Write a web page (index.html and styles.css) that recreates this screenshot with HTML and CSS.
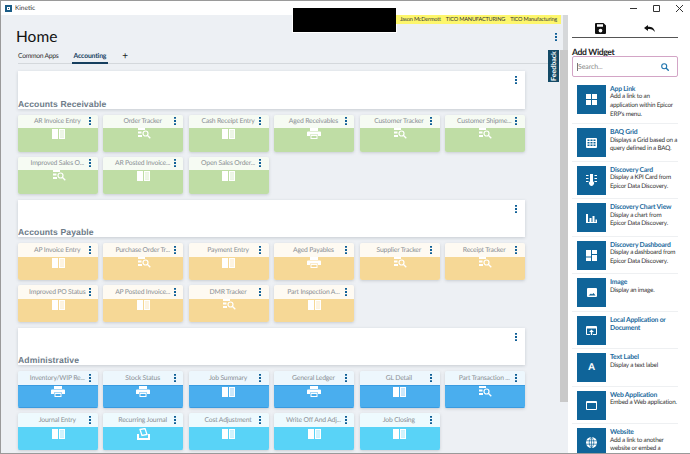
FILE: index.html
```html
<!DOCTYPE html>
<html lang="en">
<head>
<meta charset="utf-8">
<title>Kinetic</title>
<link rel="stylesheet" href="styles.css">
</head>
<body>
<svg class="defs" width="0" height="0" aria-hidden="true">
  <symbol id="book" viewBox="0 0 13 10"><path fill="#fff" d="M0 0h6v10H0z"/><path fill="#fff" fill-opacity=".72" d="M8 1.500h4v7H8z"/><path fill="#fff" fill-rule="evenodd" d="M7 0h6v10H7zM8 1.500v7h4v-7z"/></symbol>
  <symbol id="track" viewBox="0 0 13 11"><path fill="#fff" d="M0 0h7v2H0zM0 3.500h3.500v2H0zM0 7h4v2H0z"/><circle cx="7.500" cy="5.500" r="2.500" fill="none" stroke="#fff" stroke-width="1.200"/><path stroke="#fff" stroke-width="1.300" d="M9.300 7.300l3 3"/></symbol>
  <symbol id="print" viewBox="0 0 14 11"><path fill="#fff" d="M3 0h8v3H3zM1 3.500h12a1 1 0 0 1 1 1V8h-3V6.500H3V8H0V4.500a1 1 0 0 1 1-1z"/><path fill="#fff" fill-rule="evenodd" d="M3.500 7h7v4h-7zM4.500 8v2h5V8z"/></symbol>
  <symbol id="sync" viewBox="0 0 13 12"><path fill="#fff" d="M0 6h2v4h9V6h2v6H0z"/><path fill="none" stroke="#fff" stroke-width="1.300" d="M3 1.500l5-1 2 6-5 1z"/></symbol>
  <symbol id="dots" viewBox="0 0 2 9" preserveAspectRatio="none"><path fill="#0f5f96" d="M0 0h2v2H0zM0 3.500h2v2H0zM0 7h2v2H0z"/></symbol>
</svg>
<div class="window">
  <div class="titlebar">
    <span class="app-logo"><span></span></span>
    <span class="app-name">Kinetic</span>
    <div class="win-controls">
      <svg width="7" height="7" viewBox="0 0 7 7"><path d="M0 3.500h7" stroke="#333"/></svg>
      <svg width="7" height="7" viewBox="0 0 7 7"><path d="M.5.500h6v6h-6z" fill="none" stroke="#333"/></svg>
      <svg width="7" height="7" viewBox="0 0 7 7"><path d="M0 0l7 7M7 0L0 7" stroke="#333"/></svg>
    </div>
  </div>
  <div class="main">
    <div class="content">
      <div class="home-row">
        <h1 class="home">Home</h1>
        <svg class="dots page-dots"><use href="#dots"/></svg>
      </div>
      <div class="tabs">
        <span class="tab">Common Apps</span>
        <span class="tab active">Accounting</span>
        <span class="tab-add">+</span>
      </div>

      <div class="section">
        <h2>Accounts Receivable</h2>
        <svg class="dots"><use href="#dots"/></svg>
      </div>
      <div class="grid green">
        <div class="card"><div class="card-head"><span>AR Invoice Entry</span><svg class="dots"><use href="#dots"/></svg></div><div class="card-body"><svg class="i-book"><use href="#book"/></svg></div></div>
        <div class="card"><div class="card-head"><span>Order Tracker</span><svg class="dots"><use href="#dots"/></svg></div><div class="card-body"><svg class="i-track"><use href="#track"/></svg></div></div>
        <div class="card"><div class="card-head"><span>Cash Receipt Entry</span><svg class="dots"><use href="#dots"/></svg></div><div class="card-body"><svg class="i-book"><use href="#book"/></svg></div></div>
        <div class="card"><div class="card-head"><span>Aged Receivables</span><svg class="dots"><use href="#dots"/></svg></div><div class="card-body"><svg class="i-print"><use href="#print"/></svg></div></div>
        <div class="card"><div class="card-head"><span>Customer Tracker</span><svg class="dots"><use href="#dots"/></svg></div><div class="card-body"><svg class="i-track"><use href="#track"/></svg></div></div>
        <div class="card"><div class="card-head"><span>Customer Shipme...</span><svg class="dots"><use href="#dots"/></svg></div><div class="card-body"><svg class="i-track"><use href="#track"/></svg></div></div>
        <div class="card"><div class="card-head"><span>Improved Sales O...</span><svg class="dots"><use href="#dots"/></svg></div><div class="card-body"><svg class="i-track"><use href="#track"/></svg></div></div>
        <div class="card"><div class="card-head"><span>AR Posted Invoice...</span><svg class="dots"><use href="#dots"/></svg></div><div class="card-body"><svg class="i-book"><use href="#book"/></svg></div></div>
        <div class="card"><div class="card-head"><span>Open Sales Order...</span><svg class="dots"><use href="#dots"/></svg></div><div class="card-body"><svg class="i-book"><use href="#book"/></svg></div></div>
      </div>

      <div class="section">
        <h2>Accounts Payable</h2>
        <svg class="dots"><use href="#dots"/></svg>
      </div>
      <div class="grid orange">
        <div class="card"><div class="card-head"><span>AP Invoice Entry</span><svg class="dots"><use href="#dots"/></svg></div><div class="card-body"><svg class="i-book"><use href="#book"/></svg></div></div>
        <div class="card"><div class="card-head"><span>Purchase Order Tr...</span><svg class="dots"><use href="#dots"/></svg></div><div class="card-body"><svg class="i-track"><use href="#track"/></svg></div></div>
        <div class="card"><div class="card-head"><span>Payment Entry</span><svg class="dots"><use href="#dots"/></svg></div><div class="card-body"><svg class="i-book"><use href="#book"/></svg></div></div>
        <div class="card"><div class="card-head"><span>Aged Payables</span><svg class="dots"><use href="#dots"/></svg></div><div class="card-body"><svg class="i-print"><use href="#print"/></svg></div></div>
        <div class="card"><div class="card-head"><span>Supplier Tracker</span><svg class="dots"><use href="#dots"/></svg></div><div class="card-body"><svg class="i-track"><use href="#track"/></svg></div></div>
        <div class="card"><div class="card-head"><span>Receipt Tracker</span><svg class="dots"><use href="#dots"/></svg></div><div class="card-body"><svg class="i-track"><use href="#track"/></svg></div></div>
        <div class="card"><div class="card-head"><span>Improved PO Status</span><svg class="dots"><use href="#dots"/></svg></div><div class="card-body"><svg class="i-book"><use href="#book"/></svg></div></div>
        <div class="card"><div class="card-head"><span>AP Posted Invoice...</span><svg class="dots"><use href="#dots"/></svg></div><div class="card-body"><svg class="i-book"><use href="#book"/></svg></div></div>
        <div class="card"><div class="card-head"><span>DMR Tracker</span><svg class="dots"><use href="#dots"/></svg></div><div class="card-body"><svg class="i-track"><use href="#track"/></svg></div></div>
        <div class="card"><div class="card-head"><span>Part Inspection A...</span><svg class="dots"><use href="#dots"/></svg></div><div class="card-body"><svg class="i-book"><use href="#book"/></svg></div></div>
      </div>

      <div class="section">
        <h2>Administrative</h2>
        <svg class="dots"><use href="#dots"/></svg>
      </div>
      <div class="grid blue">
        <div class="card"><div class="card-head"><span>Inventory/WIP Re...</span><svg class="dots"><use href="#dots"/></svg></div><div class="card-body"><svg class="i-print"><use href="#print"/></svg></div></div>
        <div class="card"><div class="card-head"><span>Stock Status</span><svg class="dots"><use href="#dots"/></svg></div><div class="card-body"><svg class="i-print"><use href="#print"/></svg></div></div>
        <div class="card"><div class="card-head"><span>Job Summary</span><svg class="dots"><use href="#dots"/></svg></div><div class="card-body"><svg class="i-book"><use href="#book"/></svg></div></div>
        <div class="card"><div class="card-head"><span>General Ledger</span><svg class="dots"><use href="#dots"/></svg></div><div class="card-body"><svg class="i-print"><use href="#print"/></svg></div></div>
        <div class="card"><div class="card-head"><span>GL Detail</span><svg class="dots"><use href="#dots"/></svg></div><div class="card-body"><svg class="i-book"><use href="#book"/></svg></div></div>
        <div class="card"><div class="card-head"><span>Part Transaction ...</span><svg class="dots"><use href="#dots"/></svg></div><div class="card-body"><svg class="i-track"><use href="#track"/></svg></div></div>
        <div class="card cyan"><div class="card-head"><span>Journal Entry</span><svg class="dots"><use href="#dots"/></svg></div><div class="card-body"><svg class="i-book"><use href="#book"/></svg></div></div>
        <div class="card cyan"><div class="card-head"><span>Recurring Journal</span><svg class="dots"><use href="#dots"/></svg></div><div class="card-body"><svg class="i-sync"><use href="#sync"/></svg></div></div>
        <div class="card cyan"><div class="card-head"><span>Cost Adjustment</span><svg class="dots"><use href="#dots"/></svg></div><div class="card-body"><svg class="i-book"><use href="#book"/></svg></div></div>
        <div class="card cyan"><div class="card-head"><span>Write Off And Adj...</span><svg class="dots"><use href="#dots"/></svg></div><div class="card-body"><svg class="i-book"><use href="#book"/></svg></div></div>
        <div class="card cyan"><div class="card-head"><span>Job Closing</span><svg class="dots"><use href="#dots"/></svg></div><div class="card-body"><svg class="i-book"><use href="#book"/></svg></div></div>
      </div>

      <div class="feedback"><span>Feedback</span></div>
    </div>
    <div class="scrollbar"><div class="scroll-top"></div><div class="thumb"></div></div>
    <aside class="panel">
      <div class="tools">
        <svg width="11" height="11" viewBox="0 0 11 11"><path fill="#111" d="M1 0h7.500L11 2.500V10a1 1 0 0 1-1 1H1a1 1 0 0 1-1-1V1a1 1 0 0 1 1-1zm1 1.200v2.600h6V1.200zM5.500 5.700a1.900 1.900 0 1 0 0 3.800 1.900 1.900 0 0 0 0-3.800z" fill-rule="evenodd"/></svg>
        <svg width="11" height="7" viewBox="0 0 11 7"><path fill="#111" d="M4 0L0 3l4 3V4c3-.5 5 .5 7 3-1-4-3-5.200-7-5.200z"/></svg>
      </div>
      <h3 class="panel-title">Add Widget</h3>
      <div class="search">
        <span class="search-text">Search...</span>
        <svg width="8" height="8" viewBox="0 0 8 8"><circle cx="3.200" cy="3.200" r="2.500" fill="none" stroke="#1f74ad" stroke-width="1.100"/><path d="M5 5l2.700 2.700" stroke="#1f74ad" stroke-width="1.300"/></svg>
      </div>
      <div class="widgets">
        <div class="widget">
          <div class="w-icon"><svg width="11" height="11" viewBox="0 0 11 11"><path fill="#fff" d="M0 0h5v5H0zM6 0h5v5H6zM0 6h5v5H0zM6 6h5v5H6z"/></svg></div>
          <div class="w-text"><div class="w-name">App Link</div><p>Add a link to an application within Epicor ERP's menu.</p></div>
        </div>
        <div class="widget">
          <div class="w-icon"><svg width="11" height="10" viewBox="0 0 11 10"><path fill="#fff" fill-rule="evenodd" d="M1 0h9a1 1 0 0 1 1 1v8a1 1 0 0 1-1 1H1a1 1 0 0 1-1-1V1a1 1 0 0 1 1-1zm.500 1.500v1.500h2V1.500zm3 0v1.500h2V1.500zm3 0v1.500h2V1.500zm-6 2.500v1.500h2V4zm3 0v1.500h2V4zm3 0v1.500h2V4zm-6 2.500V8h2V6.500zm3 0V8h2V6.500zm3 0V8h2V6.500z"/></svg></div>
          <div class="w-text"><div class="w-name">BAQ Grid</div><p>Displays a Grid based on a query defined in a BAQ.</p></div>
        </div>
        <div class="widget">
          <div class="w-icon"><svg width="11" height="12" viewBox="0 0 11 12"><path fill="#fff" d="M4 0h3v7.200a2.500 2.500 0 1 1-3 0zM0 1h2.500v1H0zM8.500 1H11v1H8.500zM0 4h2.500v1H0zM8.500 4H11v1H8.500zM0 7h2.500v1H0zM8.500 7H11v1H8.500z"/></svg></div>
          <div class="w-text"><div class="w-name">Discovery Card</div><p>Display a KPI Card from Epicor Data Discovery.</p></div>
        </div>
        <div class="widget">
          <div class="w-icon"><svg width="11" height="10" viewBox="0 0 11 10"><path fill="#fff" d="M0 1h2v8H0zM3.500 5h2v4h-2zM6.500 3h2v6h-2zM9.500 6.500H11V9H9.500zM0 9h11v1H0z"/></svg></div>
          <div class="w-text"><div class="w-name">Discovery Chart View</div><p>Display a chart from Epicor Data Discovery.</p></div>
        </div>
        <div class="widget">
          <div class="w-icon"><svg width="11" height="11" viewBox="0 0 11 11"><path fill="#fff" d="M0 0h5v6.500H0zM6 0h5v4H6zM0 7.500h5V11H0zM6 5h5v6H6z"/></svg></div>
          <div class="w-text"><div class="w-name">Discovery Dashboard</div><p>Display a dashboard from Epicor Data Discovery.</p></div>
        </div>
        <div class="widget">
          <div class="w-icon"><svg width="10" height="9" viewBox="0 0 10 9"><path fill="#fff" fill-rule="evenodd" d="M1 0h8a1 1 0 0 1 1 1v7a1 1 0 0 1-1 1H1a1 1 0 0 1-1-1V1a1 1 0 0 1 1-1zm.500 7.500h7L6.500 5 5 6.500 4 5.500z"/></svg></div>
          <div class="w-text"><div class="w-name">Image</div><p>Display an image.</p></div>
        </div>
        <div class="widget">
          <div class="w-icon"><svg width="11" height="9" viewBox="0 0 11 9"><path fill="#fff" fill-rule="evenodd" d="M1 0h9a1 1 0 0 1 1 1v7a1 1 0 0 1-1 1H7V8h3V2.500H1V8h3v1H1a1 1 0 0 1-1-1V1a1 1 0 0 1 1-1z"/><path fill="#fff" d="M5.500 3.500L8 6H6.200v3H4.800V6H3z"/></svg></div>
          <div class="w-text"><div class="w-name">Local Application or Document</div></div>
        </div>
        <div class="widget">
          <div class="w-icon"><span class="w-letter">A</span></div>
          <div class="w-text"><div class="w-name">Text Label</div><p>Display a text label</p></div>
        </div>
        <div class="widget">
          <div class="w-icon"><svg width="11" height="9" viewBox="0 0 11 9"><path fill="#fff" fill-rule="evenodd" d="M1 0h9a1 1 0 0 1 1 1v7a1 1 0 0 1-1 1H1a1 1 0 0 1-1-1V1a1 1 0 0 1 1-1zm0 2v6h9V2z"/></svg></div>
          <div class="w-text"><div class="w-name">Web Application</div><p>Embed a Web application.</p></div>
        </div>
        <div class="widget">
          <div class="w-icon"><svg width="11" height="11" viewBox="0 0 11 11"><circle cx="5.500" cy="5.500" r="5.500" fill="#fff"/><path fill="none" stroke="#0f6499" stroke-width=".7" d="M0 3.800h11M0 7.200h11M5.500 0v11M5.500 0C2.500 3 2.500 8 5.500 11M5.500 0c3 3 3 8 0 11"/></svg></div>
          <div class="w-text"><div class="w-name">Website</div><p>Add a link to another website or embed a</p></div>
        </div>
      </div>
    </aside>
  </div>
  <div class="black-box"></div>
  <div class="userbar"><span>Jason McDermott</span><span>TICO MANUFACTURING</span><span>TICO Manufacturing</span></div>
</div>
</body>
</html>
```
FILE: styles.css
```css
* { box-sizing: border-box; }
html, body { margin: 0; height: 100%; overflow: hidden; }
body { background: #9a9a9a; font-family: Lato, "Noto Sans", sans-serif; color: #333; text-rendering: geometricPrecision; }
.defs { position: absolute; }
.window { position: relative; margin: 1px 0 0 1px; height: 452px; width: 689px; display: flex; flex-direction: column; background: #edf0f4; overflow: hidden; }

.titlebar { height: 14px; flex: none; background: #fff; display: flex; align-items: center; padding-left: 4px; }
.app-logo { width: 7px; height: 7px; background: #1b5c86; display: flex; align-items: center; justify-content: center; }
.app-logo span { width: 3px; height: 3px; border: 1px solid #fff; display: block; }
.app-name { font-size: 6.500px; margin-left: 3px; color: #333; }
.win-controls { margin-left: auto; display: flex; gap: 16px; padding-right: 7px; }

.main { flex: 1; display: flex; min-height: 0; }
.content { position: relative; width: 559px; flex: none; padding: 0 0 0 17px; }
.home-row { height: 33px; display: flex; align-items: flex-end; padding-right: 3px; }
.home { margin: 0 0 0 -2px; font-size: 15.500px; font-weight: 400; color: #111; line-height: 22px; }
.dots { width: 2px; height: 8px; flex: none; display: block; }
.page-dots { margin-left: auto; margin-bottom: 7px; }

.tabs { height: 16px; width: 531px; border-bottom: 1px solid #d4d8dc; display: flex; align-items: center; font-size: 6.800px; letter-spacing: -.3px; color: #333; }
.tab { height: 100%; display: flex; align-items: center; margin-right: 13px; }
.tab.active { color: #163f5f; border-bottom: 2px solid #163f5f; margin-bottom: -1px; font-weight: 700; letter-spacing: -.15px; padding: 2px 2px 0; }
.tab-add { font-size: 10px; margin-left: 1px; color: #222; }

.section { position: relative; width: 507px; height: 37.500px; margin-top: 7.200px; background: #fff; box-shadow: 0 1px 3px rgba(90, 100, 110, .25); display: flex; align-items: flex-end; justify-content: space-between; }
.section h2 { margin: 0; font-family: "Liberation Sans", Arial, sans-serif; font-size: 8.600px; letter-spacing: .1px; font-weight: 700; color: #6d7b88; line-height: 10px; }
.section .dots { position: absolute; right: 8px; top: 5px; }

.grid { display: grid; grid-template-columns: repeat(6, 80px); column-gap: 5.400px; row-gap: 5px; margin-top: 6px; margin-bottom: -1.300px; grid-auto-rows: 37px; }
.card { border-radius: 2px; overflow: hidden; box-shadow: 0 1px 3px rgba(90, 100, 110, .25); display: flex; flex-direction: column; }
.card-head { height: 13.500px; flex: none; display: flex; align-items: center; padding-left: 8px; font-size: 6.800px; letter-spacing: -.18px; color: #8a8f94; }
.card-head span { width: 62.500px; text-align: center; white-space: nowrap; }
.card-body { flex: 1; display: flex; justify-content: center; align-items: flex-start; padding-top: 1px; }
.i-book { width: 13px; height: 10px; }
.i-track { width: 13px; height: 11px; margin-left: 2px; margin-top: -1px; }
.i-print { width: 14px; height: 11px; margin-top: -1px; }
.i-sync { width: 13px; height: 12px; margin-top: -1px; }

.green .card-head { background: #f6fbf3; }
.green .card-body { background: #bfdda5; }
.orange .card-head { background: #fefaf2; }
.orange .card-body { background: #f6d896; }
.blue .card-head { background: #edf7fd; }
.blue .card-body { background: #4aaeee; border-top: 1px solid #3a9be0; border-bottom: 1px solid #3a9be0; }
.blue .cyan .card-head { background: #eefafe; }
.blue .cyan .card-body { background: #59d3f7; border-color: #59d3f7; }

.feedback { position: absolute; left: 547px; top: 35px; width: 11px; height: 32px; background: #144a66; color: #fff; font-size: 7px; font-weight: 700; display: flex; align-items: center; justify-content: center; }
.feedback span { transform: rotate(-90deg); white-space: nowrap; }

.scrollbar { width: 8px; flex: none; background: #edf0f4; }
.scroll-top { height: 35px; margin-left: 3px; background: #d6d8da; }
.thumb { height: 352px; background: #c9c9c9; }

.panel { flex: 1; background: #fff; padding: 0 12px 0 4px; display: flex; flex-direction: column; min-width: 0; }
.tools { height: 23px; border-bottom: 1px solid #555; display: flex; align-items: center; justify-content: space-between; flex: none; padding: 4px 23px 0; }
.panel-title { margin: 8px 0 0; font-size: 8.600px; letter-spacing: -.35px; font-weight: 700; color: #222; line-height: 12px; flex: none; }
.search { height: 21px; flex: none; margin-top: -2px; border: 1px solid #d3a5c6; border-radius: 2px; display: flex; align-items: center; justify-content: space-between; padding: 0 8px 0 4px; color: #8a8a8a; font-size: 7px; letter-spacing: -.1px; }
.search-text { border-left: 1px solid #777; line-height: 8px; }
.widgets { margin-top: 4px; flex: 1; min-height: 0; overflow: hidden; }
.widget { display: flex; gap: 4px; padding: 3.750px 0 3.750px 5px; border-bottom: 1px solid #eef0f2; }
.w-icon { width: 29px; height: 29px; flex: none; background: #0f6499; display: flex; align-items: center; justify-content: center; }
.w-letter { color: #fff; font-weight: 700; font-size: 10px; font-family: "Liberation Sans", Arial, sans-serif; }
.w-text { min-width: 0; }
.w-name { font-size: 6.800px; letter-spacing: -.2px; line-height: 8.700px; color: #1c6a9d; font-weight: 700; }
.w-text p { margin: 0; font-size: 6.300px; letter-spacing: -.2px; line-height: 8.700px; color: #333; }

.black-box { position: absolute; left: 291px; top: 7px; width: 105px; height: 25px; background: #000; border: 1px solid #fff; border-top: 0; }
.userbar { position: absolute; left: 395px; top: 14px; width: 165px; height: 9px; background: #fdf66c; display: flex; gap: 5px; justify-content: center; align-items: center; font-size: 5.600px; letter-spacing: -.2px; color: #333; white-space: nowrap; }
```
